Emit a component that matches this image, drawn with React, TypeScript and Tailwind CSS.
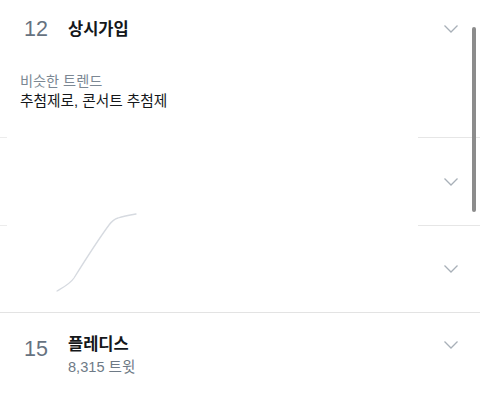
const font = { fontFamily: '"Liberation Sans", "Noto Sans CJK KR", sans-serif' };

function Chevron() {
  return (
    <svg width="16" height="10" viewBox="0 0 16 10" className="shrink-0">
      <polyline points="1.5,1.5 8,8 14.5,1.5" fill="none" stroke="#a8b0b8" strokeWidth="1.3" />
    </svg>
  );
}

function Stub() {
  return (
    <div className="flex h-px w-full">
      <div className="w-[7px] bg-[#ececec]" />
      <div className="flex-1" />
      <div className="w-[62px] bg-[#e6e6e6]" />
    </div>
  );
}

export default function App() {
  return (
    <div className="relative w-[480px] h-[400px] overflow-hidden bg-white" style={font}>
      {/* trend 12 */}
      <div className="h-[137px] flex flex-col">
        <div className="flex items-center pt-[17px] pl-[24px] pr-[21px]">
          <span className="w-[44px] text-[21.5px] leading-[24px] text-[#66727f]">12</span>
          <span className="flex-1 text-[16.5px] leading-[24px] font-bold text-[#14171a]">상시가입</span>
          <Chevron />
        </div>
        <div className="pl-[20px] pt-[30px]">
          <div className="text-[14.2px] leading-[20px] text-[#7b8793]">비슷한 트렌드</div>
          <div className="text-[14.7px] leading-[20px] text-[#14171a]">추첨제로, 콘서트 추첨제</div>
        </div>
      </div>

      <Stub />
      <div className="h-[87px] flex items-center justify-end pr-[21px]">
        <Chevron />
      </div>
      <Stub />
      <div className="h-[86px] flex items-center justify-end pr-[21px]">
        <Chevron />
      </div>
      <div className="h-px bg-[#e3e3e3]" />

      {/* trend 15 */}
      <div className="flex pt-[20px] pl-[24px] pr-[21px]">
        <span className="w-[44px] pt-[4px] text-[21.5px] leading-[24px] text-[#66727f]">15</span>
        <div className="flex-1 flex flex-col">
          <span className="text-[16.5px] leading-[22px] font-bold text-[#14171a]">플레디스</span>
          <span className="text-[14.6px] leading-[24px] text-[#6e7a86]">8,315 트윗</span>
        </div>
        <div className="pt-[7px]">
          <Chevron />
        </div>
      </div>

      {/* faded chart overlay */}
      <svg className="absolute left-0 top-[200px]" width="160" height="100" viewBox="0 200 160 100">
        <path
          d="M57 291 C64 287 70 284 74 278 C84 262 98 240 109 225 C112 221 114 219 118 218 C124 216 130 215 136 214"
          fill="none"
          stroke="#d6dae0"
          strokeWidth="1.3"
          strokeLinecap="round"
        />
      </svg>

      {/* scrollbar */}
      <div className="absolute left-[472px] top-[27px] w-[3.5px] h-[185px] rounded-full bg-[#8c8c8c]" />
    </div>
  );
}
